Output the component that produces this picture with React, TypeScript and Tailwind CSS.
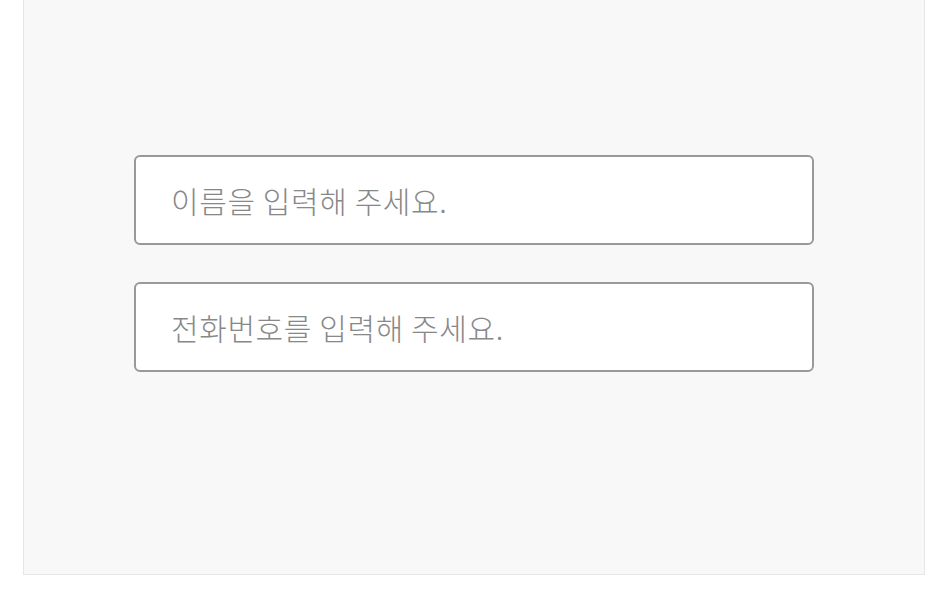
export default function App() {
  return (
    <div className="w-[949px] h-[599px] bg-white" style={{ fontFamily: '"Noto Sans CJK KR", "Noto Sans", sans-serif' }}>
      <div className="ml-[23px] w-[902px] h-[575px] bg-[#f8f8f8] border-l border-r border-b border-[#e6e6e6] flex flex-col items-center pt-[155px] gap-[37px]">
        <input
          className="w-[680px] h-[90px] bg-white border-2 border-[#999999] rounded-[6px] pl-[35px] text-[30px] font-light tracking-[0.6px] text-[#333] placeholder:text-[#888888] outline-none"
          placeholder="이름을 입력해 주세요."
        />
        <input
          className="w-[680px] h-[90px] bg-white border-2 border-[#999999] rounded-[6px] pl-[35px] text-[30px] font-light tracking-[0.6px] text-[#333] placeholder:text-[#888888] outline-none"
          placeholder="전화번호를 입력해 주세요."
        />
      </div>
    </div>
  );
}
